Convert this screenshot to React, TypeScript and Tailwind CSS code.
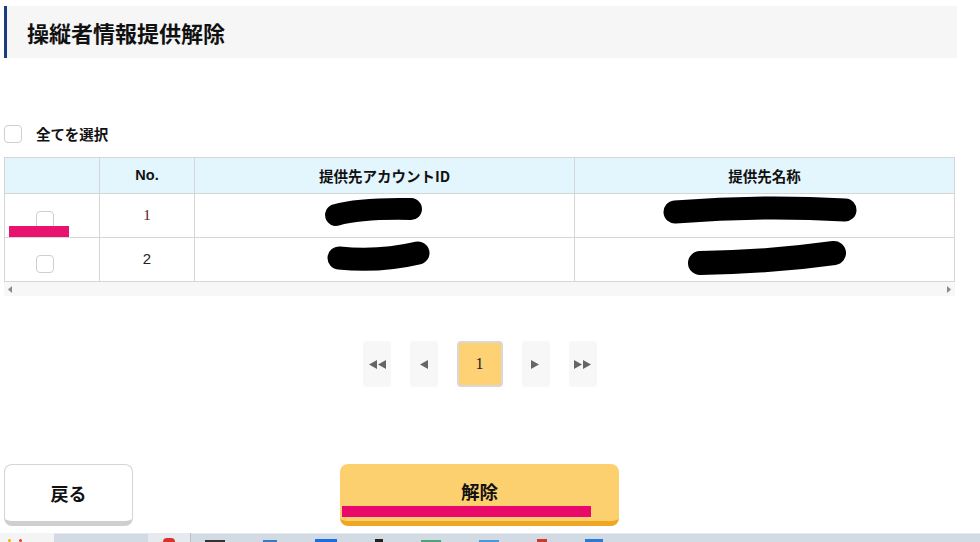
import { useState } from 'react';

const jp = { fontFamily: '"Noto Sans CJK JP", "Noto Sans", sans-serif' };

function Box({ checked, onClick }: { checked?: boolean; onClick?: () => void }) {
  return (
    <button
      type="button"
      onClick={onClick}
      className="h-[18px] w-[18px] shrink-0 rounded-[4px] border border-[#cfcfcf] bg-white"
    >
      {checked && <span className="block h-full w-full rounded-[3px] bg-[#2f6fd6]" />}
    </button>
  );
}

function PageBtn({ children, active }: { children: React.ReactNode; active?: boolean }) {
  return (
    <div
      className={
        active
          ? 'flex h-[46px] w-[46px] items-center justify-center rounded-[4px] border-2 border-[#d8d8d8] bg-[#fed174] text-[16px] text-[#222]'
          : 'flex h-[46px] w-[28px] items-center justify-center rounded-[4px] bg-[#f7f7f7] text-[#666]'
      }
    >
      {children}
    </div>
  );
}

const tri = (dir: 'l' | 'r') => (
  <svg width="9" height="9" viewBox="0 0 9 9">
    <path d={dir === 'l' ? 'M9 0 L1 4.5 L9 9 Z' : 'M0 0 L8 4.5 L0 9 Z'} fill="#666" />
  </svg>
);

export default function App() {
  const [all, setAll] = useState(false);
  const rows = [
    { no: '1', cls: 'text-[#5b1616]', font: '"Liberation Serif", serif' },
    { no: '2', cls: 'text-[#222]', font: '"Liberation Sans", sans-serif' },
  ];

  return (
    <div className="relative h-[542px] w-[980px] overflow-hidden bg-white" style={jp}>
      <div className="pl-[4px] pt-[6px]">
        <div className="flex h-[52px] w-[953px] items-center border-l-[3px] border-[#1d3c80] bg-[#f6f6f6] pl-[20px]">
          <h1 className="text-[22px] font-bold text-[#111]">操縦者情報提供解除</h1>
        </div>

        <div className="mt-[67px] flex h-[18px] items-center gap-[14px]">
          <Box checked={all} onClick={() => setAll(!all)} />
          <span className="text-[14.5px] font-bold text-[#111]">全てを選択</span>
        </div>

        <div className="relative mt-[14px] w-[951px]">
          <table className="w-full table-fixed border-collapse text-[14.5px] text-[#111]">
            <colgroup>
              <col className="w-[95px]" />
              <col className="w-[95px]" />
              <col className="w-[380px]" />
              <col />
            </colgroup>
            <thead>
              <tr className="h-[36px] bg-[#e3f5fd]">
                <th className="border border-[#d6d6d6]" />
                <th className="border border-[#d6d6d6] font-bold" style={{ fontFamily: '"Liberation Sans", sans-serif' }}>No.</th>
                <th className="border border-[#d6d6d6] font-bold">提供先アカウントID</th>
                <th className="border border-[#d6d6d6] font-bold">提供先名称</th>
              </tr>
            </thead>
            <tbody>
              {rows.map((r) => (
                <tr key={r.no} className="h-[44px]">
                  <td className="border border-[#d6d6d6] pl-[31px] pt-[12px] align-middle">
                    <Box />
                  </td>
                  <td className={`border border-[#d6d6d6] text-center text-[15px] ${r.cls}`} style={{ fontFamily: r.font }}>
                    {r.no}
                  </td>
                  <td className="border border-[#d6d6d6]" />
                  <td className="border border-[#d6d6d6]" />
                </tr>
              ))}
            </tbody>
          </table>
          <div className="flex h-[14px] items-center justify-between bg-[#f7f7f7] px-[4px]">
            <svg width="4" height="7" viewBox="0 0 4 7"><path d="M4 0 L0 3.5 L4 7 Z" fill="#8a8a8a" /></svg>
            <svg width="4" height="7" viewBox="0 0 4 7"><path d="M0 0 L4 3.5 L0 7 Z" fill="#8a8a8a" /></svg>
          </div>

          <svg className="pointer-events-none absolute left-0 top-0" width="951" height="124" viewBox="4 157 951 124">
            <g stroke="#000" strokeLinecap="round" fill="none">
              <path d="M336 215 Q 360 208 411 209" strokeWidth="22" />
              <path d="M339 258 Q 380 262 418 253" strokeWidth="23" />
              <path d="M675 212 Q 760 205 845 210" strokeWidth="23" />
              <path d="M700 263 Q 770 262 834 253" strokeWidth="24" />
            </g>
            <rect x="9" y="226" width="60" height="11" fill="#e8136f" />
          </svg>
        </div>

        <div className="mt-[45px] flex w-[951px] justify-center gap-[19px]">
          <PageBtn>
            <span className="flex">{tri('l')}{tri('l')}</span>
          </PageBtn>
          <PageBtn>{tri('l')}</PageBtn>
          <PageBtn active>
            <span style={{ fontFamily: '"Liberation Serif", serif' }}>1</span>
          </PageBtn>
          <PageBtn>{tri('r')}</PageBtn>
          <PageBtn>
            <span className="flex">{tri('r')}{tri('r')}</span>
          </PageBtn>
        </div>

        <div className="mt-[77px] flex items-start gap-[207px]">
          <button
            type="button"
            className="flex h-[62px] w-[129px] items-center justify-center rounded-[8px] border border-[#d4d4d4] border-b-[5px] border-b-[#cfcfcf] bg-white text-[18px] font-bold text-[#111]"
          >
            戻る
          </button>
          <button
            type="button"
            className="relative flex h-[62px] w-[279px] items-center justify-center rounded-[8px] border-b-[5px] border-[#f0a623] bg-[#fdd06f] pb-[2px] text-[18.5px] font-bold text-[#111]"
          >
            解除
            <span className="absolute left-[2px] top-[42px] h-[11px] w-[249px] bg-[#e8096b]" />
          </button>
        </div>
      </div>

      <div className="absolute bottom-0 left-0 flex h-[9px] w-[980px] items-end border-t border-[#e6ebf0] bg-[#d2dbe3]">
        <div className="flex h-[9px] w-[54px] items-end gap-[8px] bg-[#f4f4f4] pl-[8px]">
          <span className="h-[3px] w-[3px] rounded-full bg-[#f2b200]" />
          <span className="h-[3px] w-[3px] rounded-full bg-[#e23a2c]" />
        </div>
        <div className="w-[94px]" />
        <div className="flex h-[9px] w-[42px] items-end justify-center bg-[#e6eaee]">
          <span className="h-[4px] w-[12px] rounded-t-full bg-[#d9322a]" />
        </div>
        <div className="h-[9px] w-px bg-[#b8c0c8]" />
        <div className="ml-[14px] flex items-end gap-[38px]">
          <span className="h-[2px] w-[20px] bg-[#333]" />
          <span className="h-[2px] w-[14px] bg-[#3a78c8]" />
          <span className="h-[3px] w-[22px] bg-[#1a6fe0]" />
          <span className="h-[3px] w-[8px] bg-[#222]" />
          <span className="h-[2px] w-[20px] bg-[#4aa57a]" />
          <span className="h-[2px] w-[20px] bg-[#4a9ad8]" />
          <span className="h-[3px] w-[10px] bg-[#cc3a2a]" />
          <span className="h-[3px] w-[18px] bg-[#2a7ad8]" />
        </div>
      </div>
    </div>
  );
}
